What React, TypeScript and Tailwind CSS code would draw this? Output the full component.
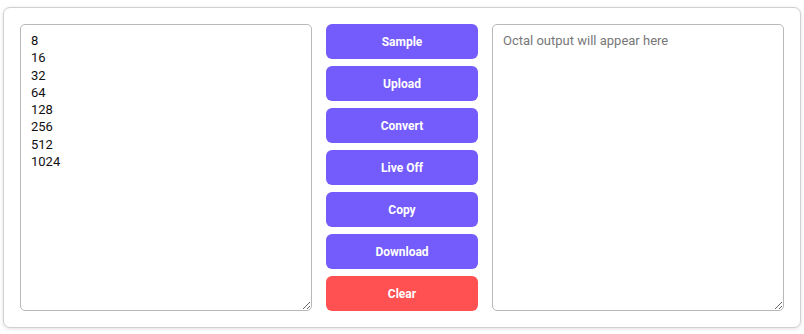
import React from 'react';

const inputText = ['8', '16', '32', '64', '128', '256', '512', '1024'].join('\n');

const buttons = ['Sample', 'Upload', 'Convert', 'Live Off', 'Copy', 'Download'];

export default function App() {
  return (
    <div className="bg-white px-[3px] pt-[7px] pb-[5px]" style={{ fontFamily: 'Roboto, "Liberation Sans", sans-serif' }}>
      <div className="rounded-[7px] border border-[#d0d0d0] bg-white p-4 shadow-[0_1px_4px_rgba(0,0,0,0.12)]">
        <div className="flex h-[287px] gap-[14px]">
          <textarea
            defaultValue={inputText}
            className="h-full w-[292px] resize-y rounded-[5px] border border-[#b8b8b8] bg-white px-[10px] py-[7px] text-[13px] leading-[17.3px] text-[#111] outline-none"
          />
          <div className="flex w-[152px] flex-col gap-[7px]">
            {buttons.map((b) => (
              <button
                key={b}
                className="h-[35px] rounded-[6px] bg-[#735cfb] text-[12px] font-bold text-white"
              >
                {b}
              </button>
            ))}
            <button className="h-[35px] rounded-[6px] bg-[#ff5052] text-[12px] font-bold text-white">
              Clear
            </button>
          </div>
          <textarea
            placeholder="Octal output will appear here"
            readOnly
            className="h-full w-[292px] resize-y rounded-[5px] border border-[#b8b8b8] bg-white px-[10px] py-[7px] text-[13px] leading-[17.3px] text-[#111] outline-none placeholder:text-[#777]"
          />
        </div>
      </div>
    </div>
  );
}
